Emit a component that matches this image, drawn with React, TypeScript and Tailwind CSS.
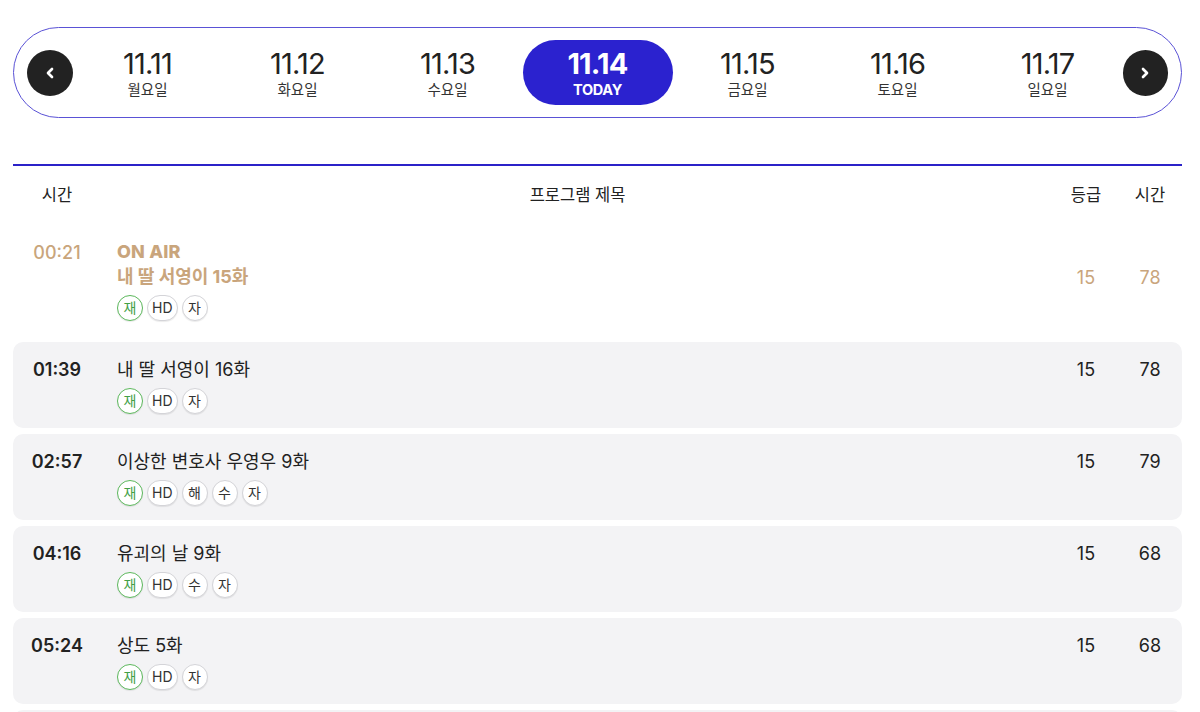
import { ChevronLeft, ChevronRight } from "lucide-react";

const dates = [
  { d: "11.11", w: "월요일" },
  { d: "11.12", w: "화요일" },
  { d: "11.13", w: "수요일" },
  { d: "11.14", w: "TODAY", today: true },
  { d: "11.15", w: "금요일" },
  { d: "11.16", w: "토요일" },
  { d: "11.17", w: "일요일" },
];

const programs = [
  { time: "00:21", title: "내 딸 서영이 15화", tags: ["재", "HD", "자"], grade: "15", run: "78", live: true },
  { time: "01:39", title: "내 딸 서영이 16화", tags: ["재", "HD", "자"], grade: "15", run: "78" },
  { time: "02:57", title: "이상한 변호사 우영우 9화", tags: ["재", "HD", "해", "수", "자"], grade: "15", run: "79" },
  { time: "04:16", title: "유괴의 날 9화", tags: ["재", "HD", "수", "자"], grade: "15", run: "68" },
  { time: "05:24", title: "상도 5화", tags: ["재", "HD", "자"], grade: "15", run: "68" },
  { time: "06:32", title: "상도 6화", tags: ["재", "HD", "자"], grade: "15", run: "68" },
];

function Tag({ t }: { t: string }) {
  const re = t === "재";
  return (
    <span
      className={
        "flex h-[26px] min-w-[26px] items-center justify-center rounded-full border bg-white px-[4px] text-[14px] leading-none shadow-[0_1px_1px_rgba(0,0,0,0.08)] " +
        (re ? "border-[#5cb85c] text-[#43a047]" : "border-[#d4d4d8] text-[#333]")
      }
    >
      {t}
    </span>
  );
}

export default function App() {
  return (
    <div className="min-h-[712px] bg-white font-['Inter','Noto_Sans_CJK_KR',sans-serif] text-[#222]">
      <div className="ml-[13px] w-[1169px] pt-[27px]">
        <div className="flex items-center rounded-full border border-[#5a52d6] px-[13px] py-[12px]">
          <button className="flex h-[46px] w-[46px] items-center justify-center rounded-full bg-[#222]">
            <ChevronLeft className="h-[16px] w-[16px] text-white" strokeWidth={4} />
          </button>
          <div className="flex flex-1">
            {dates.map((x) => (
              <div
                key={x.d}
                className={
                  "flex h-[65px] w-[150px] flex-col items-center justify-center rounded-full " +
                  (x.today ? "bg-[#2b22cf] text-white" : "")
                }
              >
                <span className={"mt-[2px] text-[29px] leading-[30px] tracking-[-0.8px] " + (x.today ? "font-bold" : "font-normal")}>
                  {x.d}
                </span>
                <span className={"mt-[2px] text-[14.5px] leading-[18px] " + (x.today ? "font-bold tracking-[-0.3px]" : "text-[#333]")}>
                  {x.w}
                </span>
              </div>
            ))}
          </div>
          <button className="flex h-[46px] w-[46px] items-center justify-center rounded-full bg-[#222]">
            <ChevronRight className="h-[16px] w-[16px] text-white" strokeWidth={4} />
          </button>
        </div>

        <div className="mt-[46px] border-t-2 border-[#2b22c8]">
          <div className="flex h-[58px] items-center text-[16.5px]">
            <div className="w-[88px] text-center">시간</div>
            <div className="flex-1 text-center">프로그램 제목</div>
            <div className="w-[64px] text-center">등급</div>
            <div className="w-[64px] text-center">시간</div>
          </div>

          <div className="flex flex-col gap-[6px]">
            {programs.map((p) => (
              <div
                key={p.time}
                className={
                  "flex rounded-[10px] pt-[14px] text-[18px] leading-[27px] " +
                  (p.live ? "pb-[15px] pt-[15px] text-[#c9a57c]" : "pb-[14px] bg-[#f3f3f5]")
                }
              >
                <div className={"w-[88px] text-center " + (p.live ? "font-medium" : "font-semibold")}>{p.time}</div>
                <div className="flex-1 pl-[16px]">
                  {p.live && <div className="text-[18px] font-extrabold leading-[25px] tracking-[0.2px]">ON AIR</div>}
                  <div className={p.live ? "font-bold leading-[25px]" : ""}>{p.title}</div>
                  <div className={"flex gap-[4px] " + (p.live ? "mt-[6px]" : "mt-[5px]")}>
                    {p.tags.map((t, i) => (
                      <Tag key={i} t={t} />
                    ))}
                  </div>
                </div>
                <div className={"w-[64px] text-center " + (p.live ? "pt-[25px]" : "")}>{p.grade}</div>
                <div className={"w-[64px] text-center " + (p.live ? "pt-[25px]" : "")}>{p.run}</div>
              </div>
            ))}
          </div>
        </div>
      </div>
    </div>
  );
}
